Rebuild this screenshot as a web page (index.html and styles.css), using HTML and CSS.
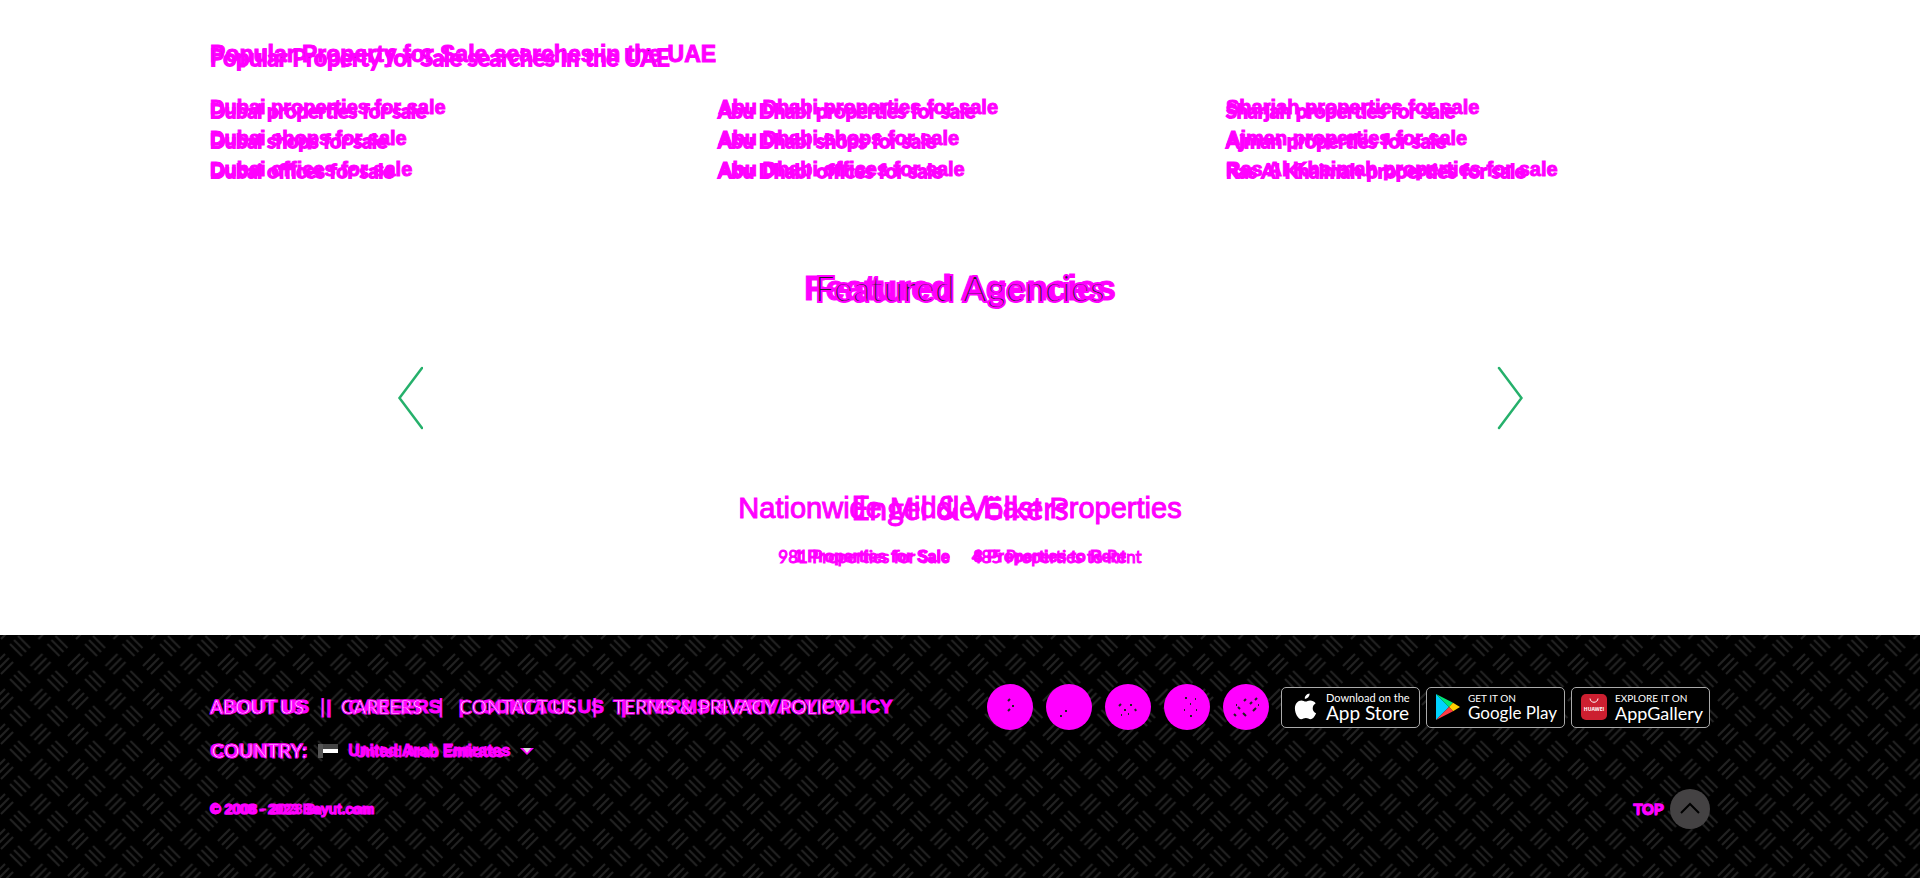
FILE: index.html
```html
<!DOCTYPE html>
<html lang="en">
<head>
<meta charset="utf-8">
<title>Bayut</title>
<link rel="stylesheet" href="styles.css">
</head>
<body>
<main>
  <section class="wrap searches stack">
    <div class="sans">
      <h2>Popular Property for Sale searches in the UAE</h2>
      <ul class="links">
        <li><a href="#">Dubai properties for sale</a></li><li><a href="#">Abu Dhabi properties for sale</a></li><li><a href="#">Sharjah properties for sale</a></li>
        <li><a href="#">Dubai shops for sale</a></li><li><a href="#">Abu Dhabi shops for sale</a></li><li><a href="#">Ajman properties for sale</a></li>
        <li><a href="#">Dubai offices for sale</a></li><li><a href="#">Abu Dhabi offices for sale</a></li><li><a href="#">Ras Al Khaimah properties for sale</a></li>
      </ul>
    </div>
    <div class="lato">
      <h2>Popular Property for Sale searches in the UAE</h2>
      <ul class="links">
        <li><a href="#">Dubai properties for sale</a></li><li><a href="#">Abu Dhabi properties for sale</a></li><li><a href="#">Sharjah properties for sale</a></li>
        <li><a href="#">Dubai shops for sale</a></li><li><a href="#">Abu Dhabi shops for sale</a></li><li><a href="#">Ajman properties for sale</a></li>
        <li><a href="#">Dubai offices for sale</a></li><li><a href="#">Abu Dhabi offices for sale</a></li><li><a href="#">Ras Al Khaimah properties for sale</a></li>
      </ul>
    </div>
  </section>

  <section class="agencies">
    <h2 class="stack featured"><span class="sans">Featured Agencies</span><span class="lato">Featured Agencies</span></h2>
    <div class="carousel">
      <button class="arrow" aria-label="Previous"><svg width="26" height="64" viewBox="0 0 26 64"><path d="M25 2 2.500 32 25 62" /></svg></button>
      <button class="arrow" aria-label="Next"><svg width="26" height="64" viewBox="0 0 26 64"><path d="M2 2 24.500 32 2 62" /></svg></button>
    </div>
    <h3 class="stack agency"><span class="sans">Nationwide Middle East Properties</span><span class="lato">Engel &amp; Völkers</span></h3>
    <div class="stack counts">
      <p class="sans"><a href="#">1 Properties for Sale</a><a href="#">8 Properties to Rent</a></p>
      <p class="lato"><a href="#">981 Properties for Sale</a><a href="#">485 Properties to Rent</a></p>
    </div>
  </section>
</main>

<footer>
  <svg class="weave" aria-hidden="true"><defs><pattern id="weave" width="37.500" height="35" patternUnits="userSpaceOnUse"><path d="M10 9l12 12M14 5l12 12M18 1l12 12M-7 31l12-12M-3 35l12-12M1 39l12-12M30.500 31l12-12M34.500 35l12-12M1 4l12-12M38.500 4l12-12M34.500 0l12-12"/></pattern></defs><rect width="100%" height="100%" fill="url(#weave)"/></svg>
  <div class="wrap foot">
    <div class="row main-row">
      <nav class="stack light">
        <p class="sans"><a href="#">ABOUT US</a><i>|</i><a href="#">CAREERS</a><i>|</i><a href="#">CONTACT US</a><i>|</i><a href="#">TERMS &amp; PRIVACY POLICY</a></p>
        <p class="lato"><a href="#">ABOUT US</a><i>|</i><a href="#">CAREERS</a><i>|</i><a href="#">CONTACT US</a><i>|</i><a href="#">TERMS &amp; PRIVACY POLICY</a></p>
      </nav>
      <div class="row apps">
        <div class="row social">
          <a href="#" aria-label="Facebook"><svg viewBox="0 0 46 46"><path d="M21 17l2-2M25 22h2M21 27l2-2"/></svg></a>
          <a href="#" aria-label="Twitter"><svg viewBox="0 0 46 46"><path d="M19 27h2M14 32h2"/></svg></a>
          <a href="#" aria-label="YouTube"><svg viewBox="0 0 46 46"><path d="M14 22l2-2M25 21h2M19 26h2M30 25l1 2M16 31h1M23 30h1"/></svg></a>
          <a href="#" aria-label="Instagram"><svg viewBox="0 0 46 46"><path d="M21 14h2M26 20h1M31 15h1M20 26h1M32 26h1M26 32h2"/></svg></a>
          <a href="#" aria-label="LinkedIn"><svg viewBox="0 0 46 46"><path d="M21 17l2-2M13 21h1M15 23l2 2M27 20l2-2M32 16l2-2M30 27l3-3M11 30l2 2M20 29l3 3M35 21h1"/></svg></a>
        </div>
        <a class="badge apple" href="#">
          <svg width="24" height="30" viewBox="0 0 24 30"><path fill="#fff" d="M15.600 1.500c.2 2.700-2.200 5.400-4.800 5.300-.2-2.700 2.200-5 4.800-5.300zM18.700 16.500c0-2.700 1.400-4.200 3-5.300-1.500-2-3.400-2.800-5.500-2.800-2 0-3.300 1.100-4.500 1.100s-2.600-1.100-4.300-1.100C4 8.500.9 11.400.9 16.500c0 4.900 3.300 10.700 6.300 10.700 1.700 0 2.600-1.100 4.700-1.100s2.900 1.100 4.600 1.100c2.600 0 4.900-3.900 5.600-6-2-.9-3.400-2.400-3.400-4.700z"/></svg>
          <span><small>Download on the</small><b>App Store</b></span>
        </a>
        <a class="badge google" href="#">
          <svg width="24" height="28" viewBox="0 0 24 28"><path fill="#00d2ff" d="M0 1v26l13-13z"/><path fill="#00e676" d="M0 1l17 8.800L13 14z"/><path fill="#ffce00" d="M17 9.800l7 4.200-7 4.200-4-4.200z"/><path fill="#ff3a44" d="M0 27l13-13 4 4.200z"/></svg>
          <span><small>GET IT ON</small><b>Google Play</b></span>
        </a>
        <a class="badge" href="#">
          <svg width="26" height="26" viewBox="0 0 26 26"><rect width="26" height="26" rx="5" fill="#cc1f30"/><path d="M9 4.500c.5 5 7.500 5 8 0" fill="none" stroke="#fff"/><text x="13" y="17" text-anchor="middle">HUAWEI</text></svg>
          <span><small>EXPLORE IT ON</small><b>AppGallery</b></span>
        </a>
      </div>
    </div>
    <button class="country">
      <span class="stack light"><span class="sans">COUNTRY:</span><span class="lato">COUNTRY:</span></span>
      <svg width="20" height="14" viewBox="0 0 20 14"><path fill="#444" d="M0 0h20v5H0z"/><path fill="#fff" d="M5 5h15v4H5z"/><path fill="#555" d="M0 0h5v14H0z"/><path fill="#000" d="M5 9h15v5H5z"/></svg>
      <span class="stack emirates"><span class="lato">United Arab Emirates</span><span class="sans">United Arab Emirates</span></span>
      <svg width="14" height="7" viewBox="0 0 14 7"><path fill="#f0f" d="M0 0h14L7 7z"/><path fill="#ddd" d="M3 0h8L7 5z"/></svg>
    </button>
    <div class="row last">
      <p class="stack copy"><span class="lato">© 2008 - 2023 Bayut.com</span><span class="sans">© 2008 - 2023 Bayut.com</span></p>
      <a class="row top" href="#"><span class="stack"><span class="lato">TOP</span><span class="sans">TOP</span></span>
        <svg width="40" height="40" viewBox="0 0 40 40"><circle cx="20" cy="20" r="20" fill="#444243"/><path d="M11 24l9-9 9 9" fill="none" stroke="#000" stroke-width="2"/></svg></a>
    </div>
  </div>
</footer>
</body>
</html>
```
FILE: styles.css
```css
* { box-sizing: border-box; }
body { margin: 0; background: #fff; color: #f0f; font-family: "Liberation Sans", Arial, sans-serif; }
h2, h3, p, ul { margin: 0; padding: 0; list-style: none; font-weight: inherit; }
a { color: inherit; text-decoration: none; }
i { font-style: normal; }
button { border: 0; padding: 0; background: none; color: inherit; font: inherit; cursor: pointer; }
svg { display: block; flex: none; }

.wrap { width: 100%; max-width: 1548px; margin: 0 auto; padding: 0 24px; }
.row { display: flex; align-items: center; }
.stack { display: grid; }
.stack > * { grid-area: 1 / 1; }
.sans { font-family: "Liberation Sans", Arial, sans-serif; font-weight: 700; -webkit-text-stroke: 1px #f0f; }
.lato { font-family: Lato, sans-serif; font-weight: 400; -webkit-text-stroke: 1px #f0f; }

.searches { padding-top: 38px; }
.searches h2 { font-size: 23px; line-height: 32px; }
.links { display: grid; grid-template-columns: repeat(3, 1fr); column-gap: 24px; padding-top: 22px; font-size: 20px; line-height: 31px; }
.searches .lato { padding-top: 3px; -webkit-text-stroke: 2px #f0f; }
.searches .lato .links { line-height: 30px; }
.searches .lato h2 { color: #222; }
.searches .lato a { color: #1d5a6a; }

.agencies { padding-top: 79px; text-align: center; }
.featured { font-size: 35px; line-height: 48px; }
.featured .lato { color: #222; font-size: 36px; -webkit-text-stroke: 2px #f0f; }
.carousel { display: flex; justify-content: space-between; max-width: 1126px; margin: 54px auto 0; }
.arrow path { fill: none; stroke: #25b06b; stroke-width: 2.5; stroke-linecap: round; }
.agency { margin-top: 56px; font-size: 29px; line-height: 44px; }
.agency .sans { font-weight: 400; }
.agency .lato { font-size: 32px; }
.counts { margin-top: 15px; font-size: 16px; line-height: 24px; }
.counts p { display: flex; justify-content: center; gap: 24px; }
.counts .lato { gap: 22px; font-size: 17px; }

footer { position: relative; margin-top: 66px; background: #000; }
.weave { position: absolute; inset: 0; width: 100%; height: 100%; }
.weave path { fill: none; stroke: #222; stroke-width: 2; }
.foot { position: relative; padding-top: 49px; padding-bottom: 50px; }
.main-row, .last { justify-content: space-between; }
nav p { display: flex; gap: 17px; white-space: nowrap; font-size: 19px; line-height: 24px; }
nav .lato { gap: 16px; }
.light .lato { color: #fff; }
.social { gap: 13px; margin-right: 6px; }
.social a { width: 46px; height: 46px; border-radius: 50%; background: #f0f; }
.social path { fill: none; stroke: #222; stroke-width: 2; }
.apps { gap: 6px; }
.badge { display: flex; align-items: center; gap: 8px; width: 139px; height: 41px; padding-left: 9px; border: 1px solid #aaa; border-radius: 5px; background: #000; color: #fff; font-family: Lato, sans-serif; white-space: nowrap; }
.badge small, .badge b { display: block; font-weight: 400; }
.badge small { font-size: 10px; line-height: 12px; }
.badge b { font-size: 18px; line-height: 18px; }
.apple { padding-left: 12px; }
.apple small { font-size: 11px; }
.apple b { font-size: 19px; }
.google b { font-size: 17px; }
.badge text { fill: #fff; font: 700 5px "Open Sans", sans-serif; }
.country { display: flex; align-items: center; gap: 10px; margin-top: 9px; font-size: 19px; line-height: 24px; }
.emirates { font-size: 16px; }
.last { margin-top: 26px; }
.copy { font-size: 14px; line-height: 20px; }
.top { gap: 6px; font-size: 15px; }
```
